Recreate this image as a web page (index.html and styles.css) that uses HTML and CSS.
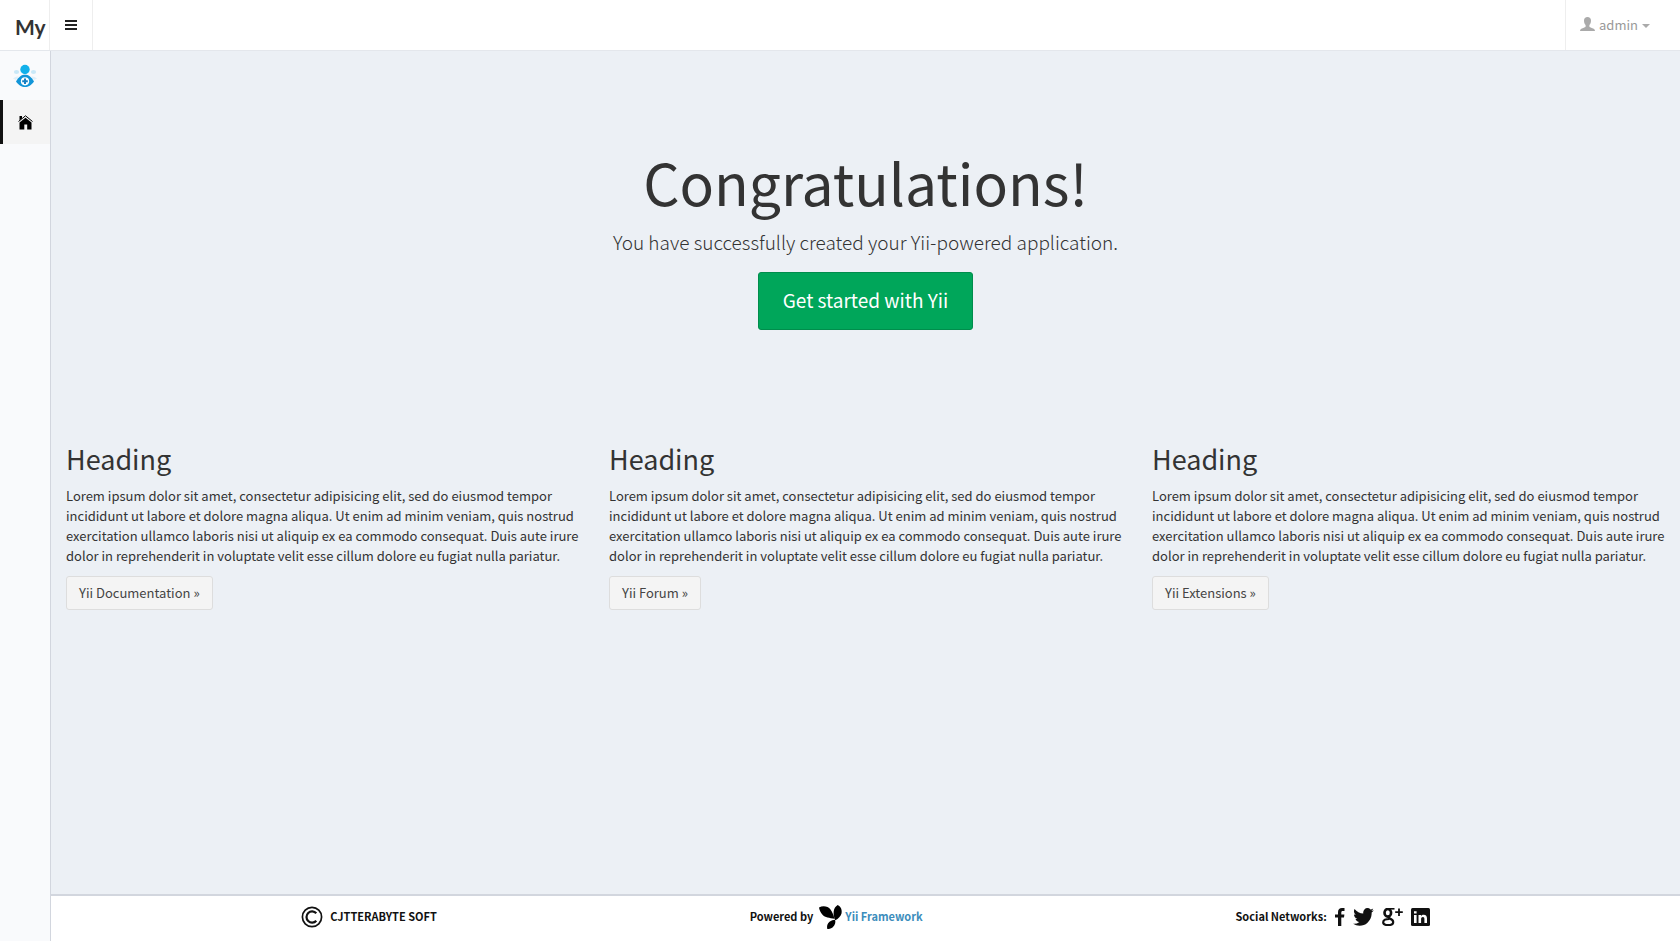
FILE: index.html
```html
<!DOCTYPE html>
<html lang="en">
<head>
<meta charset="utf-8">
<title>My Application</title>
<link rel="stylesheet" href="styles.css">
</head>
<body>
<header class="topbar">
  <a class="logo" href="#">My</a>
  <button class="toggle" type="button" aria-label="Toggle navigation">
    <svg width="12" height="10" viewBox="0 0 12 10"><path d="M0 0h12v2H0zM0 4h12v2H0zM0 8h12v2H0z"/></svg>
  </button>
  <button class="user" type="button">
    <svg width="15" height="16" viewBox="0 0 15 16"><path d="M7.500 0C9.600 0 11 1.300 11 3.500c0 2-.7 3.600-1.600 4.600v1.400c0 .7 1 .9 2.300 1.400 2 .7 3.300 1.200 3.300 3.100H0c0-1.900 1.300-2.400 3.300-3.100 1.300-.5 2.300-.7 2.300-1.400V8.100C4.700 7.100 4 5.500 4 3.500 4 1.300 5.400 0 7.500 0z"/></svg>
    <span>admin</span>
    <svg width="8" height="6" viewBox="0 0 8 6"><path d="M0 2h8L4 6z"/></svg>
  </button>
</header>
<div class="body">
  <nav class="sidebar" aria-label="Main">
    <a class="brand" href="#" aria-label="Profile">
      <svg width="24" height="24" viewBox="0 0 24 24">
        <g fill="#c9e8f8"><ellipse cx="3.500" cy="8" rx="2.600" ry="1.900"/><ellipse cx="20.500" cy="8" rx="2.600" ry="1.900"/><path d="M0 14.500q3-2.500 5.500-2l-2.500 3.500zM24 14.500q-3-2.500-5.500-2l2.500 3.500z" opacity=".6"/></g>
        <circle cx="12" cy="5.500" r="4.700" fill="#12b0ea"/>
        <path d="M3 17.500C6 12.500 8.500 10.800 12 10.800s6 1.700 9 6.700C18 21.500 15.500 23 12 23s-6-1.500-9-5.500z" fill="#1295d8"/>
        <circle cx="12" cy="17.300" r="4.100" fill="#fff"/>
        <path d="M12 14.500v5.600M9.200 17.300h5.600" stroke="#1680c4" stroke-width="2"/>
      </svg>
    </a>
    <a class="item" href="#" aria-label="Home">
      <svg width="15" height="15" viewBox="0 0 15 15"><path d="M1.500 1h2.500v2.400l-2.500 2.200z"/><path d="M.5 6.500L7.500.8l7 5.700" fill="none" stroke="#000" stroke-width="1"/><path d="M7.500 2.700L13.500 7.600V14.500H9.200V9.500H6.300v5H1.500V7.600z"/></svg>
    </a>
  </nav>
  <div class="page">
    <main class="content">
      <section class="hero">
        <h1>Congratulations!</h1>
        <p class="lead">You have successfully created your Yii-powered application.</p>
        <a class="btn btn-success" href="#">Get started with Yii</a>
      </section>
      <div class="row">
        <section class="col">
          <h2>Heading</h2>
          <p>Lorem ipsum dolor sit amet, consectetur adipisicing elit, sed do eiusmod tempor incididunt ut labore et dolore magna aliqua. Ut enim ad minim veniam, quis nostrud exercitation ullamco laboris nisi ut aliquip ex ea commodo consequat. Duis aute irure dolor in reprehenderit in voluptate velit esse cillum dolore eu fugiat nulla pariatur.</p>
          <a class="btn btn-default" href="#">Yii Documentation »</a>
        </section>
        <section class="col">
          <h2>Heading</h2>
          <p>Lorem ipsum dolor sit amet, consectetur adipisicing elit, sed do eiusmod tempor incididunt ut labore et dolore magna aliqua. Ut enim ad minim veniam, quis nostrud exercitation ullamco laboris nisi ut aliquip ex ea commodo consequat. Duis aute irure dolor in reprehenderit in voluptate velit esse cillum dolore eu fugiat nulla pariatur.</p>
          <a class="btn btn-default" href="#">Yii Forum »</a>
        </section>
        <section class="col">
          <h2>Heading</h2>
          <p>Lorem ipsum dolor sit amet, consectetur adipisicing elit, sed do eiusmod tempor incididunt ut labore et dolore magna aliqua. Ut enim ad minim veniam, quis nostrud exercitation ullamco laboris nisi ut aliquip ex ea commodo consequat. Duis aute irure dolor in reprehenderit in voluptate velit esse cillum dolore eu fugiat nulla pariatur.</p>
          <a class="btn btn-default" href="#">Yii Extensions »</a>
        </section>
      </div>
    </main>
    <footer class="footer">
      <div class="copy">
        <svg width="22" height="22" viewBox="0 0 22 22" fill="none" stroke="#111"><circle cx="11" cy="11" r="9.600" stroke-width="1.700"/><path d="M15.300 7.300A5.600 5.600 0 1 0 15.300 14.700" stroke-width="2.200"/></svg>
        <span>CJTTERABYTE SOFT</span>
      </div>
      <div class="powered">
        <span>Powered by</span>
        <a href="#"><svg width="24" height="24" viewBox="0 0 24 24"><path d="M0 2.500C4 .3 9 1.200 11.500 4.500 13.700 7.500 14.500 10.500 15.500 13.700 10.500 13 6 12.500 3.500 9.800 1.500 7.600.5 5 0 2.500zM18.700 0C22 1.500 23.300 5 22.500 8.500 21.700 11.500 19.500 13.500 16.300 15.300 15.200 12.500 14.200 9.500 14.700 6.200 15.100 3.500 16.500 1.300 18.700 0zM16 14.700C17 17 16 20.500 13.500 22.500 11.700 23.800 9.800 24 8.300 24 7.600 21 8.300 18.500 10.500 16.700 12.200 15.300 14.300 15 16 14.700z"/></svg><span>Yii Framework</span></a>
      </div>
      <div class="social">
        <span>Social Networks:</span>
        <a href="#" aria-label="Facebook"><svg width="10" height="18" viewBox="0 0 10 18"><path d="M9.500 0v3H7.800C6.600 3 6.300 3.600 6.300 4.500V6.400h3.100L9 9.600H6.300V18H3V9.600H0V6.400h3V4.100C3 1.500 4.600 0 7 0z"/></svg></a>
        <a href="#" aria-label="Twitter"><svg width="21" height="18" viewBox="100 250 1600 1300" preserveAspectRatio="none"><path d="M1684 408q-67 98-162 167 1 14 1 42 0 130-38 259.500t-115.500 248.500-184.500 210.500-258 146-323 54.500q-271 0-496-145 35 4 78 4 225 0 401-138-105-2-188-64.500t-114-159.500q33 5 61 5 43 0 85-11-112-23-185.500-111.500t-73.500-205.500v-4q68 38 146 41-66-44-105-115t-39-154q0-88 44-163 121 149 294.500 238.500t371.500 99.500q-8-38-8-74 0-134 94.500-228.500t228.500-94.500q140 0 236 102 109-21 205-78-37 115-142 178 93-10 186-50z"/></svg></a>
        <a href="#" aria-label="Google Plus"><svg width="21" height="18" viewBox="0 0 21 18"><g fill="none" stroke="#111"><ellipse cx="5.800" cy="4.800" rx="3.300" ry="3.800" stroke-width="2.600"/><path d="M6 .8h6.500" stroke-width="1.600"/><path d="M8 8q-2 1.200-.5 2.400 3.700 1.400 3.700 3.500c0 2.200-2 3.200-5 3.200s-5-.8-5-2.900 2.500-3.200 6-3.200" stroke-width="2.200"/><path d="M17 .5v7.500M13.200 4.200h7.600" stroke-width="1.800"/></g></svg></a>
        <a href="#" aria-label="LinkedIn"><svg width="19" height="18" viewBox="0 0 19 18"><rect width="19" height="18" rx="1.500"/><path d="M3 7h2.600v8H3zM3 3.200h2.600v2.400H3zM7.500 7H10v1.200C10.600 7.300 11.400 6.800 12.700 6.800 15 6.800 16 8.200 16 10.600V15h-2.600v-4c0-1.300-.4-2-1.500-2S10.100 9.900 10.100 11v4H7.500z" fill="#fff"/></svg></a>
      </div>
    </footer>
  </div>
</div>
</body>
</html>
```
FILE: styles.css
```css
* { box-sizing: border-box; }

body {
  margin: 0;
  min-height: 100vh;
  display: flex;
  flex-direction: column;
  font-family: "Noto Sans CJK SC", "Noto Sans", sans-serif;
  font-size: 13px;
  line-height: 20px;
  color: #333;
  background: #ecf0f5;
}

svg { display: block; flex: none; }
a { text-decoration: none; }
h1, h2, p { margin: 0; font-weight: 400; }

button {
  border: 0;
  padding: 0;
  background: none;
  font: inherit;
  cursor: pointer;
}

.topbar {
  display: flex;
  height: 51px;
  background: #fff;
  border-bottom: 1px solid #e4e7ec;
}

.logo {
  width: 50px;
  padding: 4px 0 0 15px;
  border-right: 1px solid #eee;
  font: 700 21px/46px Lato, sans-serif;
  color: #333;
}

.toggle {
  width: 43px;
  display: flex;
  align-items: center;
  justify-content: center;
  border-right: 1px solid #eee;
  fill: #222;
}

.user {
  width: 115px;
  margin-left: auto;
  padding-left: 14px;
  display: flex;
  align-items: center;
  gap: 4px;
  border-left: 1px solid #eee;
  color: #999;
  fill: #aaa;
}

.body { flex: 1; display: flex; }

.sidebar {
  width: 51px;
  background: #f9fafc;
  border-right: 1px solid #d2d6de;
}

.brand {
  height: 49px;
  display: flex;
  align-items: center;
  justify-content: center;
}

.item {
  height: 44px;
  display: flex;
  align-items: center;
  justify-content: center;
  padding-right: 3px;
  background: #f4f4f4;
  border-left: 3px solid #111;
}

.page {
  flex: 1;
  min-width: 0;
  display: flex;
  flex-direction: column;
}

.content { flex: 1; }

.hero {
  padding: 95px 60px 112px;
  text-align: center;
}

.hero h1 { font-size: 57px; line-height: 70px; }
.lead { margin: 12px 0 16px; font-size: 19px; font-weight: 300; line-height: 28px; }

.btn {
  display: inline-block;
  border: 1px solid;
  border-radius: 3px;
}

.btn-success {
  padding: 13px 24px 15px;
  font-size: 19px;
  line-height: 28px;
  color: #fff;
  background: #00a65a;
  border-color: #008d4c;
}

.btn-default {
  padding: 6px 12px;
  color: #444;
  background: #f4f4f4;
  border-color: #ddd;
}

.row {
  display: grid;
  grid-template-columns: repeat(3, 1fr);
}

.col { padding: 0 15px; }
.col h2 { font-size: 27px; line-height: 33px; }
.col p { margin: 11px 0 10px; }

.footer {
  display: grid;
  grid-template-columns: 4fr auto 5fr auto 5fr auto 4fr;
  align-items: center;
  height: 47px;
  padding-bottom: 3px;
  background: #fff;
  border-top: 2px solid #d2d6de;
  font-size: 11px;
  font-weight: 700;
  color: #111;
  fill: #111;
}

.footer div, .footer a { display: flex; align-items: center; }
.footer span { padding-bottom: 3px; }
.copy { grid-column: 2; gap: 7px; }
.powered { grid-column: 4; gap: 6px; }
.powered a { gap: 2px; color: #3c8dbc; fill: #000; }
.social { grid-column: 6; gap: 8px; }
```
